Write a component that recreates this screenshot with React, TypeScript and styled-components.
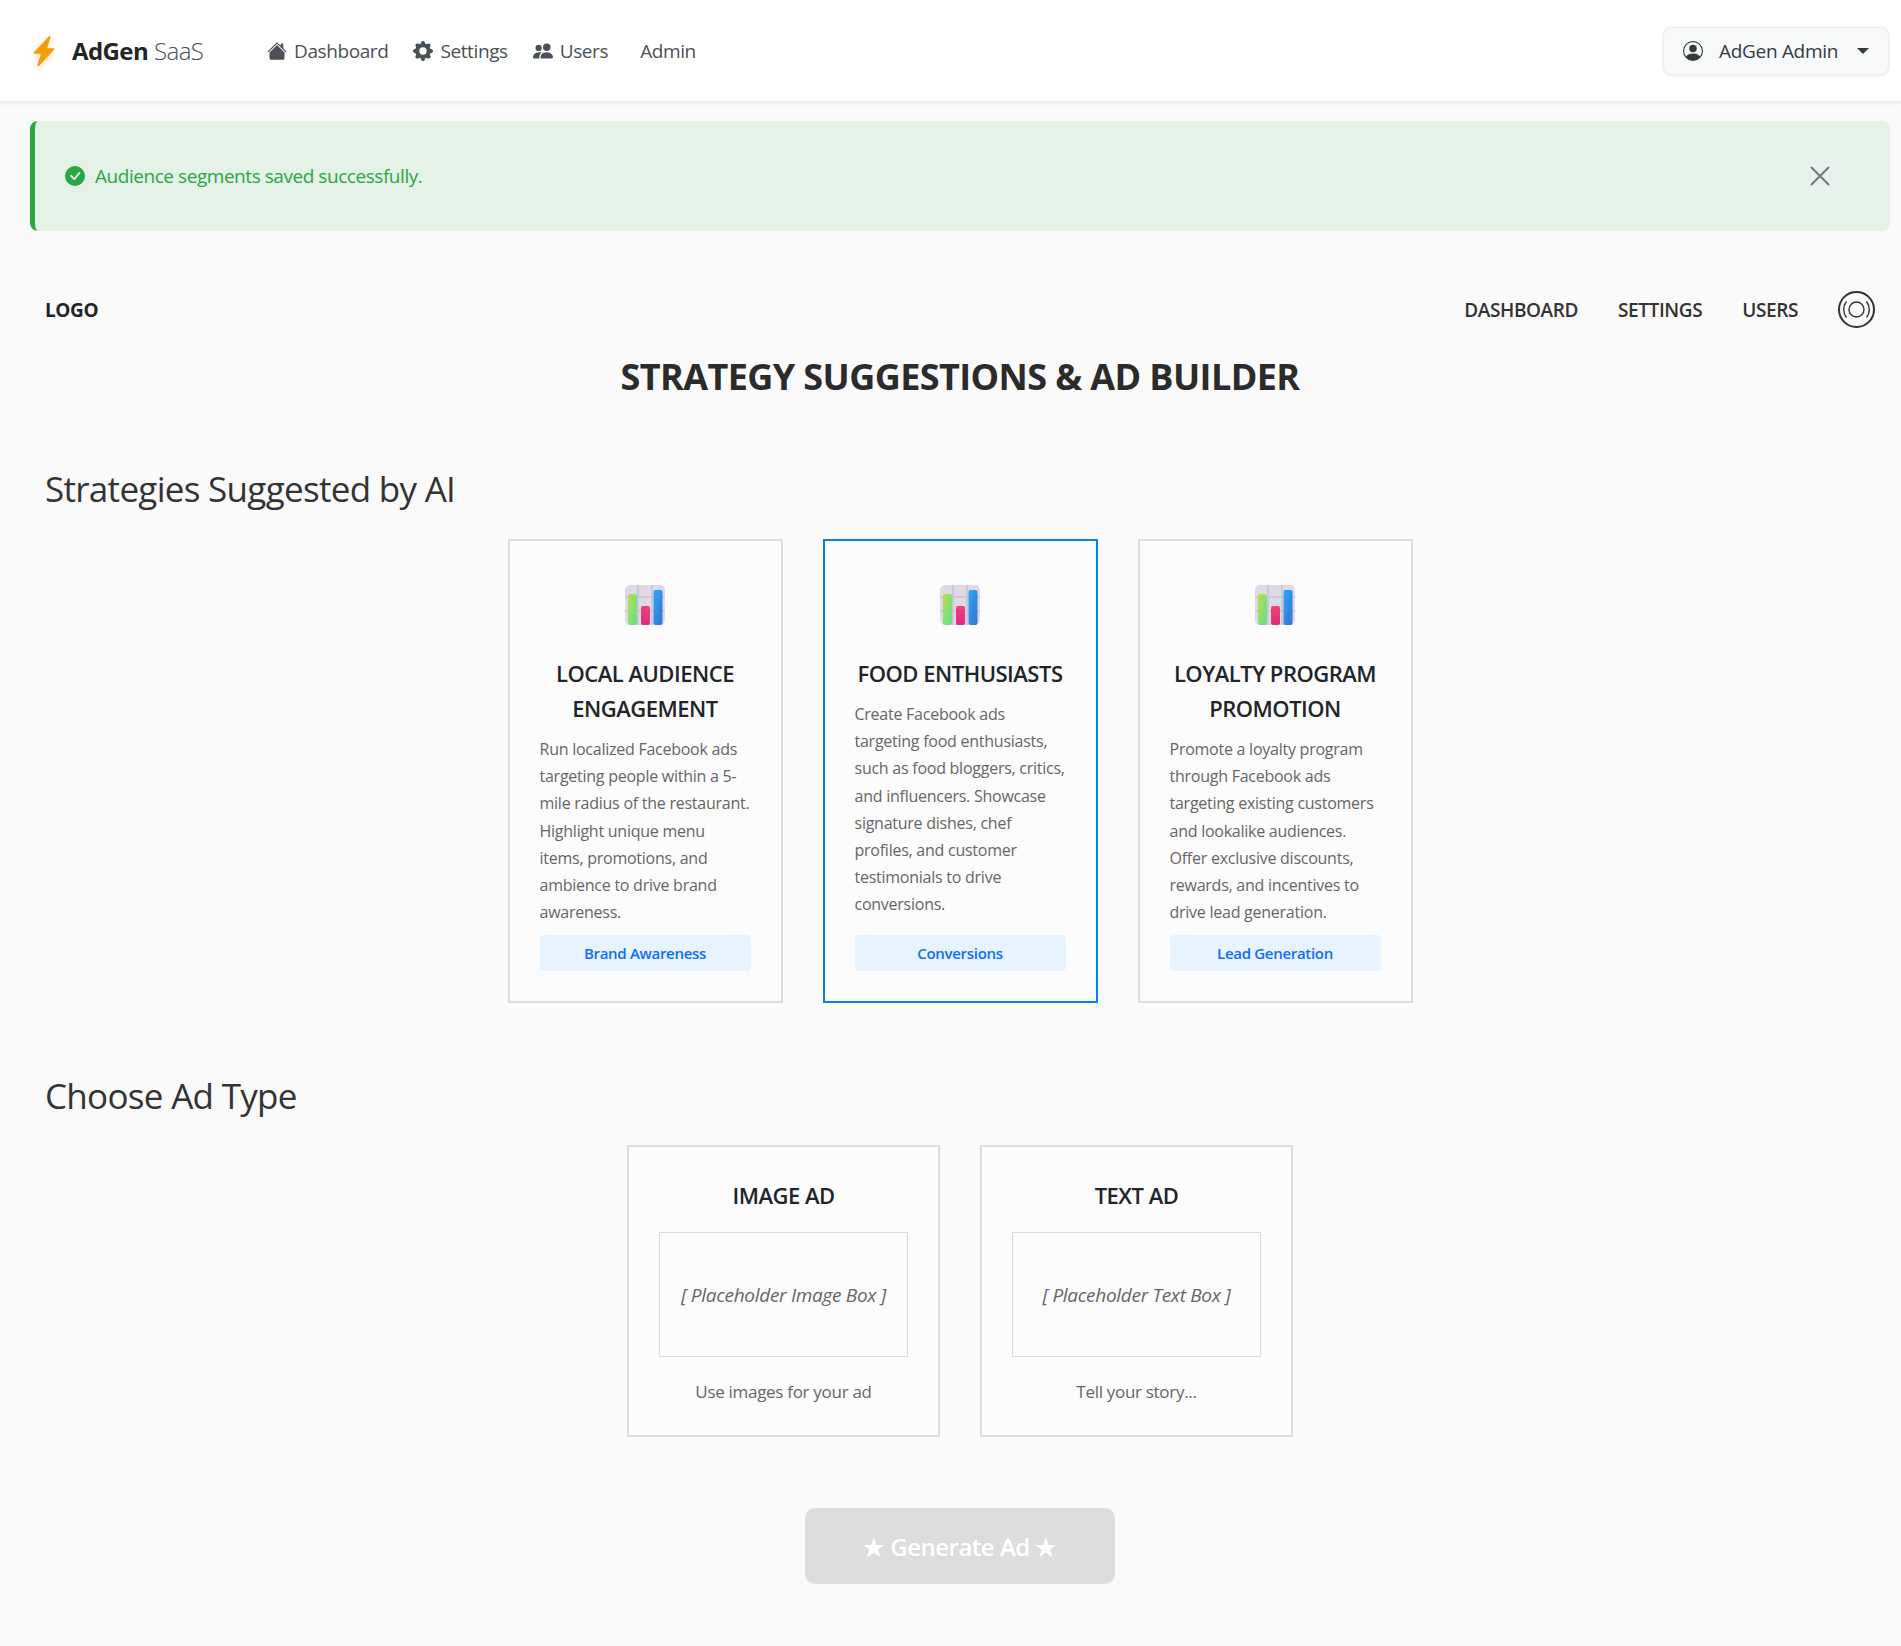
import styled, { createGlobalStyle } from "styled-components";
import {
  BsCheckCircleFill,
  BsGearFill,
  BsHouseFill,
  BsLightningChargeFill,
  BsPeopleFill,
  BsPersonCircle,
} from "react-icons/bs";

const GlobalStyle = createGlobalStyle`
  * { box-sizing: border-box; }
  body {
    margin: 0;
    background: #fafafa;
    font-family: "Open Sans", "Noto Sans", sans-serif;
    color: #212529;
  }
`;

const TopBar = styled.header`
  height: 101px;
  background: #fff;
  box-shadow: 0 2px 4px rgba(0, 0, 0, 0.08);
  display: flex;
  align-items: center;
  padding: 0 12px 0 30px;
`;

const Brand = styled.div`
  display: flex;
  align-items: center;
  width: 237px;
  font-size: 24px;
  letter-spacing: -0.6px;
  color: #212529;
  b { font-weight: 700; margin: 0 6px 0 13px; }
  span { font-weight: 300; color: #495057; }
  svg {
    width: 30px;
    height: 30px;
    color: #f59e0b;
    margin-left: -1px;
    filter: drop-shadow(0 2px 3px rgba(245, 158, 11, 0.35));
  }
`;

const TopLinks = styled.nav`
  display: flex;
  align-items: center;
  flex: 1;
`;

const TopLink = styled.a<{ $gap?: number }>`
  display: flex;
  align-items: center;
  gap: 7px;
  margin-right: ${(p) => p.$gap ?? 25}px;
  font-size: 19px;
  letter-spacing: -0.4px;
  color: #495057;
  svg { width: 20px; height: 20px; }
`;

const UserButton = styled.button`
  width: 226px;
  height: 48px;
  display: flex;
  align-items: center;
  padding: 0 19px;
  background: #f8f9fa;
  border: 1px solid #eee;
  border-radius: 8px;
  box-shadow: 0 1px 3px rgba(0, 0, 0, 0.08);
  font-family: inherit;
  font-size: 19px;
  letter-spacing: -0.3px;
  color: #343a40;
  svg { width: 20px; height: 20px; margin-right: 16px; }
  i {
    margin-left: auto;
    border-top: 6px solid #343a40;
    border-left: 6px solid transparent;
    border-right: 6px solid transparent;
  }
`;

const Main = styled.main`
  padding: 20px 11px 30px 30px;
`;

const Alert = styled.div`
  height: 110px;
  display: flex;
  align-items: center;
  padding: 0 50px 0 30px;
  background: #e5f2e8;
  border-left: 5px solid #28a745;
  border-radius: 8px;
  color: #28a745;
  font-size: 19px;
  font-weight: 500;
  letter-spacing: -0.45px;
  > svg { width: 20px; height: 20px; margin-right: 10px; }
`;

const CloseIcon = styled.svg`
  width: 20px;
  height: 20px;
  margin-left: auto;
`;

const PageNav = styled.div`
  height: 37px;
  margin-top: 60px;
  padding: 0 15px;
  display: flex;
  align-items: center;
  font-size: 19px;
  font-weight: 600;
  color: #333;
  letter-spacing: -0.4px;
`;

const PageLogo = styled.div`
  font-weight: 700;
  color: #212529;
  margin-right: auto;
`;

const PageLink = styled.a<{ $gap: number }>`
  margin-right: ${(p) => p.$gap}px;
`;

const Title = styled.h1`
  margin: 22px 0 0;
  text-align: center;
  font-size: 36px;
  line-height: 54px;
  font-weight: 700;
  letter-spacing: -0.6px;
  color: #2b2b2b;
`;

const SectionTitle = styled.h2<{ $top: number }>`
  margin: ${(p) => p.$top}px 0 0;
  padding-left: 15px;
  font-size: 35px;
  line-height: 50px;
  font-weight: 500;
  letter-spacing: -0.7px;
  color: #333;
`;

const CardRow = styled.div`
  display: flex;
  justify-content: center;
  align-items: stretch;
  gap: 40px;
  margin-top: 25px;
`;

const StrategyCard = styled.article<{ $active?: boolean }>`
  width: 275px;
  padding: 30px;
  background: #fcfcfc;
  border: 2px solid ${(p) => (p.$active ? "#0d7ee8" : "#ddd")};
  display: flex;
  flex-direction: column;
  align-items: center;
`;

const ChartIcon = styled.svg`
  width: 40px;
  height: 40px;
  margin: 14px 0 31px;
  flex: none;
`;

const CardTitle = styled.h3`
  margin: 0 0 10px;
  width: 100%;
  text-align: center;
  font-size: 22px;
  line-height: 35px;
  font-weight: 600;
  letter-spacing: -0.5px;
  color: #212529;
`;

const CardText = styled.p`
  margin: 0 0 9px;
  width: 100%;
  font-size: 16px;
  line-height: 27.2px;
  letter-spacing: -0.25px;
  color: #666;
`;

const Tag = styled.div`
  margin-top: auto;
  width: 100%;
  height: 36px;
  display: flex;
  align-items: center;
  justify-content: center;
  background: #e7f3ff;
  border-radius: 4px;
  color: #0d6efd;
  font-size: 15px;
  font-weight: 600;
  letter-spacing: -0.3px;
`;

const AdRow = styled(CardRow)`
  margin-top: 24px;
`;

const AdCard = styled.article`
  width: 313px;
  height: 292px;
  padding: 30px;
  background: #fcfcfc;
  border: 2px solid #ddd;
  text-align: center;
`;

const AdTitle = styled.h3`
  margin: 0;
  font-size: 22px;
  line-height: 36px;
  font-weight: 600;
  letter-spacing: -0.5px;
  color: #212529;
`;

const PlaceholderBox = styled.div`
  height: 125px;
  margin-top: 19px;
  padding: 0 20px;
  display: flex;
  align-items: center;
  justify-content: center;
  border: 1px solid #ddd;
  font-size: 19px;
  font-style: italic;
  line-height: 32px;
  letter-spacing: -0.3px;
  color: #666;
`;

const AdCaption = styled.p`
  margin: 21px 0 0;
  font-size: 17px;
  line-height: 27px;
  letter-spacing: -0.3px;
  color: #666;
`;

const GenerateRow = styled.div`
  display: flex;
  justify-content: center;
  margin-top: 71px;
`;

const GenerateButton = styled.button`
  width: 310px;
  height: 76px;
  background: #ddd;
  border: none;
  border-radius: 10px;
  color: #fff;
  font-family: inherit;
  font-size: 24px;
  font-weight: 600;
  letter-spacing: -0.5px;
`;

const strategies = [
  {
    title: "LOCAL AUDIENCE ENGAGEMENT",
    text: "Run localized Facebook ads targeting people within a 5-mile radius of the restaurant. Highlight unique menu items, promotions, and ambience to drive brand awareness.",
    tag: "Brand Awareness",
  },
  {
    title: "FOOD ENTHUSIASTS",
    text: "Create Facebook ads targeting food enthusiasts, such as food bloggers, critics, and influencers. Showcase signature dishes, chef profiles, and customer testimonials to drive conversions.",
    tag: "Conversions",
    active: true,
  },
  {
    title: "LOYALTY PROGRAM PROMOTION",
    text: "Promote a loyalty program through Facebook ads targeting existing customers and lookalike audiences. Offer exclusive discounts, rewards, and incentives to drive lead generation.",
    tag: "Lead Generation",
  },
];

function BarChart({ id }: { id: string }) {
  return (
    <ChartIcon viewBox="0 0 40 40">
      <defs>
        <linearGradient id={`${id}g`} x1="0" y1="0" x2="1" y2="1">
          <stop offset="0" stopColor="#b5e04e" />
          <stop offset="1" stopColor="#5fe08a" />
        </linearGradient>
        <linearGradient id={`${id}p`} x1="0" y1="0" x2="0" y2="1">
          <stop offset="0" stopColor="#f0407a" />
          <stop offset="1" stopColor="#e02a80" />
        </linearGradient>
        <linearGradient id={`${id}b`} x1="0" y1="0" x2="1" y2="1">
          <stop offset="0" stopColor="#2aa8f8" />
          <stop offset="1" stopColor="#3a70d0" />
        </linearGradient>
      </defs>
      <rect width="40" height="40" rx="5" fill="#dfdae6" />
      <path d="M13 0v40M27 0v40M0 12h40M0 26h40" stroke="#c8c3d0" strokeWidth="1.6" />
      <rect x="3" y="9" width="9" height="31" rx="2" fill={`url(#${id}g)`} />
      <rect x="16" y="21" width="9" height="19" rx="2" fill={`url(#${id}p)`} />
      <rect x="28.500" y="5" width="9" height="35" rx="2" fill={`url(#${id}b)`} />
    </ChartIcon>
  );
}

export default function App() {
  return (
    <>
      <GlobalStyle />
      <TopBar>
        <Brand>
          <BsLightningChargeFill />
          <b>AdGen</b>
          <span>SaaS</span>
        </Brand>
        <TopLinks>
          <TopLink>
            <BsHouseFill />
            Dashboard
          </TopLink>
          <TopLink>
            <BsGearFill />
            Settings
          </TopLink>
          <TopLink $gap={32}>
            <BsPeopleFill />
            Users
          </TopLink>
          <TopLink>Admin</TopLink>
        </TopLinks>
        <UserButton>
          <BsPersonCircle />
          AdGen Admin
          <i />
        </UserButton>
      </TopBar>

      <Main>
        <Alert>
          <BsCheckCircleFill />
          Audience segments saved successfully.
          <CloseIcon viewBox="0 0 20 20">
            <path d="M1 1l18 18M19 1L1 19" stroke="#6f7d73" strokeWidth="2" />
          </CloseIcon>
        </Alert>

        <PageNav>
          <PageLogo>LOGO</PageLogo>
          <PageLink $gap={40}>DASHBOARD</PageLink>
          <PageLink $gap={40}>SETTINGS</PageLink>
          <PageLink $gap={40}>USERS</PageLink>
          <svg width="37" height="37" viewBox="0 0 37 37" fill="none" stroke="#333">
            <circle cx="18.500" cy="18.500" r="17.500" strokeWidth="2" />
            <circle cx="18.500" cy="18.500" r="7.500" strokeWidth="1.400" />
            <path d="M8.500 10.500a13 13 0 0 0 0 16M28.500 10.500a13 13 0 0 1 0 16" strokeWidth="1.400" />
          </svg>
        </PageNav>

        <Title>STRATEGY SUGGESTIONS &amp; AD BUILDER</Title>

        <SectionTitle $top={60}>Strategies Suggested by AI</SectionTitle>
        <CardRow>
          {strategies.map((s, i) => (
            <StrategyCard key={s.title} $active={s.active}>
              <BarChart id={`c${i}`} />
              <CardTitle>{s.title}</CardTitle>
              <CardText>{s.text}</CardText>
              <Tag>{s.tag}</Tag>
            </StrategyCard>
          ))}
        </CardRow>

        <SectionTitle $top={68}>Choose Ad Type</SectionTitle>
        <AdRow>
          <AdCard>
            <AdTitle>IMAGE AD</AdTitle>
            <PlaceholderBox>[ Placeholder Image Box ]</PlaceholderBox>
            <AdCaption>Use images for your ad</AdCaption>
          </AdCard>
          <AdCard>
            <AdTitle>TEXT AD</AdTitle>
            <PlaceholderBox>[ Placeholder Text Box ]</PlaceholderBox>
            <AdCaption>Tell your story...</AdCaption>
          </AdCard>
        </AdRow>

        <GenerateRow>
          <GenerateButton>★ Generate Ad ★</GenerateButton>
        </GenerateRow>
      </Main>
    </>
  );
}
